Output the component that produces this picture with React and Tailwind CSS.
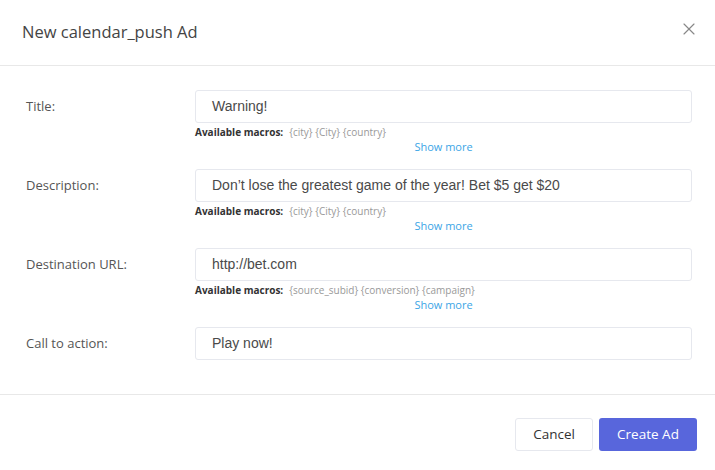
import React from 'react';
import { X } from 'lucide-react';

const ui = { fontFamily: '"Open Sans", "Noto Sans", sans-serif' };
const field = { fontFamily: '"Liberation Sans", Arial, sans-serif' };

const Field = ({ label, value, macros }) => (
    <div className="flex">
        <div className="w-[195px] shrink-0 pl-[26px] pt-[7px] text-[13px] text-[#555]">{label}</div>
        <div className="flex-1">
            <div
                className="h-[33px] border border-[#e6e8ee] rounded-[3px] px-4 flex items-center text-[14px] text-[#4a4a4a]"
                style={field}
            >
                {value}
            </div>
            {macros && (
                <>
                    <div className="mt-[3px] h-[12px] flex items-center gap-[6px] leading-none">
                        <span className="text-[10px] font-bold text-[#333]">Available macros:</span>
                        <span className="text-[10px] text-[#999]">{macros}</span>
                    </div>
                    <div className="mt-[3px] h-[12px] leading-none text-center text-[11px] text-[#3ba5e6]">Show more</div>
                </>
            )}
        </div>
    </div>
);

export default function App() {
    return (
        <div className="w-[715px] h-[470px] bg-white flex flex-col" style={ui}>
            {/* Header */}
            <div className="h-[66px] shrink-0 border-b border-[#e8e8e8] flex items-center justify-between pl-[22px] pr-[16px]">
                <h2 className="text-[16.5px] text-[#444]">New calendar_push Ad</h2>
                <X size={20} strokeWidth={1.4} className="text-[#888] -mt-[8px]" />
            </div>

            {/* Body */}
            <div className="pt-[24px] pr-[23px] flex flex-col gap-[16px] h-[329px] border-b border-[#e8e8e8]">
                <Field label="Title:" value="Warning!" macros="{city} {City} {country}" />
                <Field
                    label="Description:"
                    value="Don’t lose the greatest game of the year! Bet $5 get $20"
                    macros="{city} {City} {country}"
                />
                <Field
                    label="Destination URL:"
                    value="http://bet.com"
                    macros="{source_subid} {conversion} {campaign}"
                />
                <Field label="Call to action:" value="Play now!" />
            </div>

            {/* Footer */}
            <div className="flex justify-end gap-[6px] pt-[23px] pr-[18px]">
                <button className="h-[33px] w-[78px] border border-[#e6e8ee] rounded-[3px] text-[13.5px] text-[#333] bg-white">
                    Cancel
                </button>
                <button className="h-[33px] w-[98px] rounded-[3px] text-[13.5px] text-white bg-[#5866dc]">
                    Create Ad
                </button>
            </div>
        </div>
    );
}
